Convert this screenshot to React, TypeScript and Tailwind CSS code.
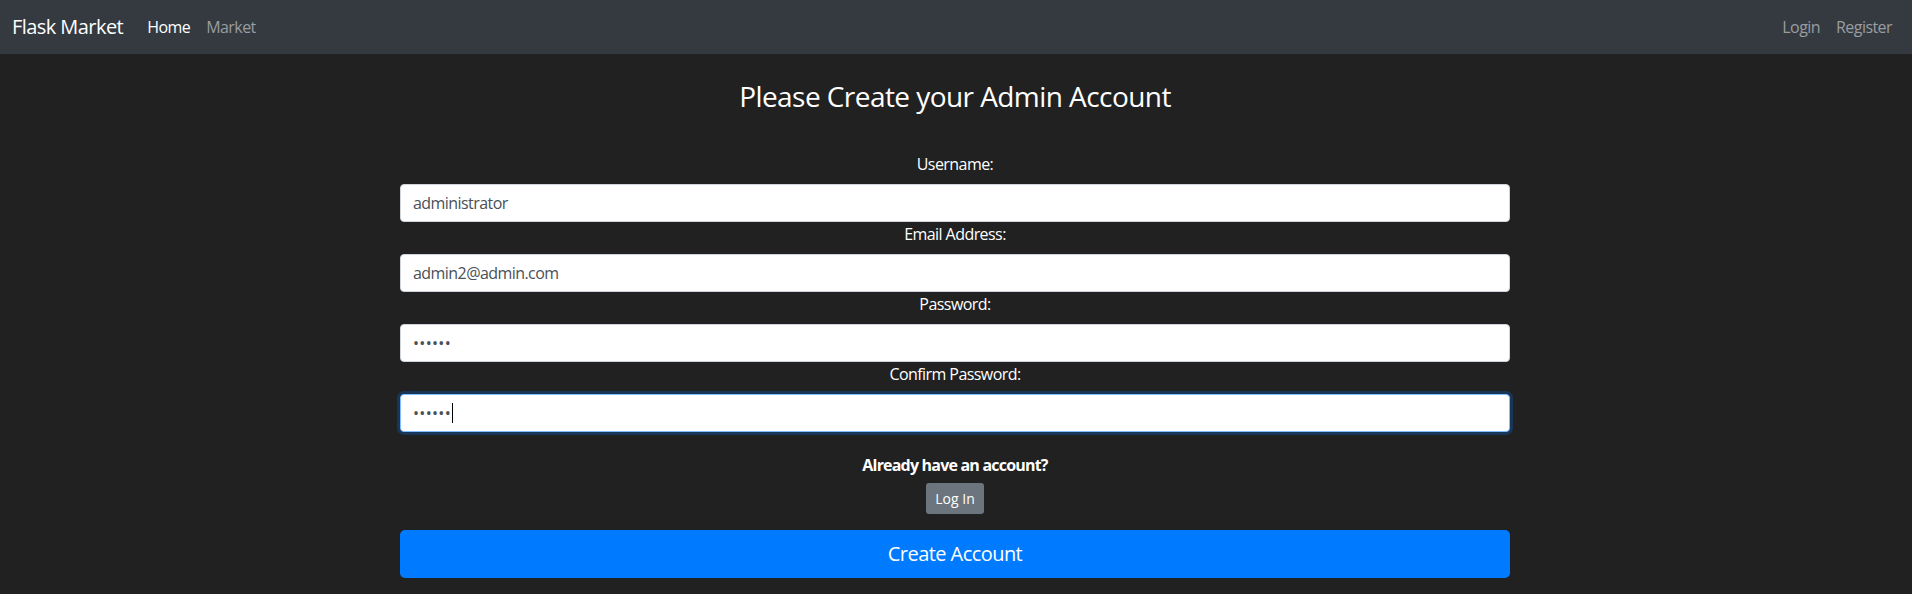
import React from "react";

const font = "font-['Open_Sans','Noto_Sans',sans-serif] tracking-[-0.035em]";

function Field({ label, value, type = "text" }: { label: string; value: string; type?: string }) {
  return (
    <div className="flex flex-col">
      <label className="text-center text-[16px] leading-[24px] text-white mb-2">{label}</label>
      <input
        type={type}
        defaultValue={value}
        className={`h-[38px] w-full rounded-[4px] border border-[#ced4da] bg-white px-3 text-[16px] text-[#495057] outline-none ${
          type === "password" ? "tracking-[0.02em]" : ""
        }`}
      />
    </div>
  );
}

export default function App() {
  return (
    <div className={`min-h-screen bg-[#212121] ${font}`}>
      <nav className="flex h-[54px] items-center bg-[#343a40] px-3">
        <a className="mr-4 text-[20px] leading-[30px] text-white">Flask Market</a>
        <a className="px-2 text-[16px] leading-[24px] text-white">Home</a>
        <a className="px-2 text-[16px] leading-[24px] text-[#9a9da0]">Market</a>
        <div className="ml-auto flex">
          <a className="px-2 text-[16px] leading-[24px] text-[#9a9da0]">Login</a>
          <a className="px-2 text-[16px] leading-[24px] text-[#9a9da0]">Register</a>
        </div>
      </nav>
      <div className="mx-auto w-[1110px] translate-x-[-1px]">
        <h3 className="mt-[25px] text-center text-[28px] leading-[34px] text-white">Please Create your Admin Account</h3>
        <form className="mt-[39px] flex flex-col" onSubmit={(e) => e.preventDefault()}>
          <Field label="Username:" value="administrator" />
          <Field label="Email Address:" value="admin2@admin.com" type="email" />
          <Field label="Password:" value="123456" type="password" />
          <div className="flex flex-col">
            <label className="text-center text-[16px] leading-[24px] text-white mb-2">Confirm Password:</label>
            <div className="relative">
              <input
                type="password"
                defaultValue="123456"
                className="h-[38px] w-full rounded-[4px] border border-[#80bdff] bg-white px-3 text-[16px] tracking-[0.02em] text-[#495057] shadow-[0_0_0_3px_rgba(0,123,255,0.25)] outline-none"
              />
              <span className="absolute left-[52px] top-[9px] h-[20px] w-px bg-black" />
            </div>
          </div>
          <div className="mt-6 flex flex-col items-center">
            <h6 className="text-[16px] font-bold leading-[19px] tracking-[-0.05em] text-white">Already have an account?</h6>
            <button
              type="button"
              className="mt-2 h-[31px] rounded-[3px] bg-[#6c757d] px-[9px] text-[14px] leading-[21px] tracking-normal text-white"
            >
              Log In
            </button>
          </div>
          <button
            type="submit"
            className="mt-4 h-[48px] w-full rounded-[5px] bg-[#007bff] text-[20px] leading-[30px] text-white"
          >
            Create Account
          </button>
        </form>
      </div>
    </div>
  );
}
